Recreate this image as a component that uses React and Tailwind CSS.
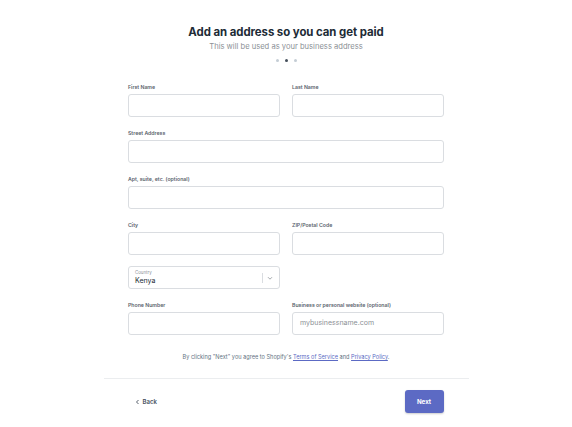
import React from "react";

function Field({ label, placeholder }) {
  return (
    <div className="flex flex-col">
      <div className="text-[5.2px] leading-[7px] font-semibold text-[#5a636d] h-[7px]">{label}</div>
      <div className="mt-[3px] h-[23px] rounded-[3px] border border-[#dadde1] bg-white flex items-center px-[7px] text-[7px] text-[#8c9196]">
        {placeholder}
      </div>
    </div>
  );
}

export default function App() {
  return (
    <div className="w-[572px] h-[427px] bg-white flex flex-col items-center" style={{ fontFamily: "Inter, 'Noto Sans', sans-serif" }}>
      <div className="mt-[24px] text-[11.4px] leading-[16px] font-bold text-[#212b36] tracking-[-0.05px]">
        Add an address so you can get paid
      </div>
      <div className="mt-[2px] text-[7.6px] leading-[10px] text-[#8c9196]">
        This will be used as your business address
      </div>
      <div className="mt-[7px] flex gap-[6px] items-center">
        <span className="w-[3px] h-[3px] rounded-full bg-[#c4cdd5]" />
        <span className="w-[3px] h-[3px] rounded-full bg-[#454f5b]" />
        <span className="w-[3px] h-[3px] rounded-full bg-[#c4cdd5]" />
      </div>

      <div className="mt-[22px] w-[316px] flex flex-col gap-[13px]">
        <div className="grid grid-cols-2 gap-[12px]">
          <Field label="First Name" />
          <Field label="Last Name" />
        </div>
        <Field label="Street Address" />
        <Field label="Apt, suite, etc. (optional)" />
        <div className="flex flex-col gap-[11px]">
          <div className="grid grid-cols-2 gap-[12px]">
            <Field label="City" />
            <Field label="ZIP/Postal Code" />
          </div>
          <div className="grid grid-cols-2 gap-[12px]">
            <div className="h-[23px] rounded-[3px] border border-[#dadde1] bg-white flex items-center pl-[6px] pr-[5px]">
              <div className="flex-1 flex flex-col">
                <span className="text-[4.4px] leading-[6px] text-[#8c9196]">Country</span>
                <span className="text-[7px] leading-[9px] text-[#212b36]">Kenya</span>
              </div>
              <span className="w-px h-[10px] bg-[#dadde1]" />
              <svg width="8" height="8" viewBox="0 0 10 10" className="ml-[3px]">
                <path d="M2.5 4 L5 6.5 L7.5 4" fill="none" stroke="#8c9196" strokeWidth="1" />
              </svg>
            </div>
            <div />
          </div>
        </div>
        <div className="grid grid-cols-2 gap-[12px]">
          <Field label="Phone Number" />
          <Field label="Business or personal website (optional)" placeholder="mybusinessname.com" />
        </div>
      </div>

      <div className="mt-[18px] text-[5.6px] leading-[8px] text-[#637381]">
        By clicking "Next" you agree to Shopify's{" "}
        <span className="text-[#5c6ac4] underline">Terms of Service</span> and{" "}
        <span className="text-[#5c6ac4] underline">Privacy Policy</span>.
      </div>

      <div className="mt-[17px] w-[365px] h-px bg-[#ebedef]" />

      <div className="mt-[11px] w-[365px] flex items-center justify-between pl-[31px] pr-[25px]">
        <div className="flex items-center gap-[3px] text-[6px] font-semibold text-[#454f5b]">
          <svg width="5" height="6" viewBox="0 0 5 6">
            <path d="M3.5 1 L1.5 3 L3.5 5" fill="none" stroke="#454f5b" strokeWidth="0.9" />
          </svg>
          Back
        </div>
        <div className="w-[39px] h-[23px] rounded-[3px] bg-[#5c6ac4] shadow-[0_1px_2px_rgba(0,0,0,0.2)] flex items-center justify-center text-[6.2px] font-bold text-white">
          Next
        </div>
      </div>
    </div>
  );
}
